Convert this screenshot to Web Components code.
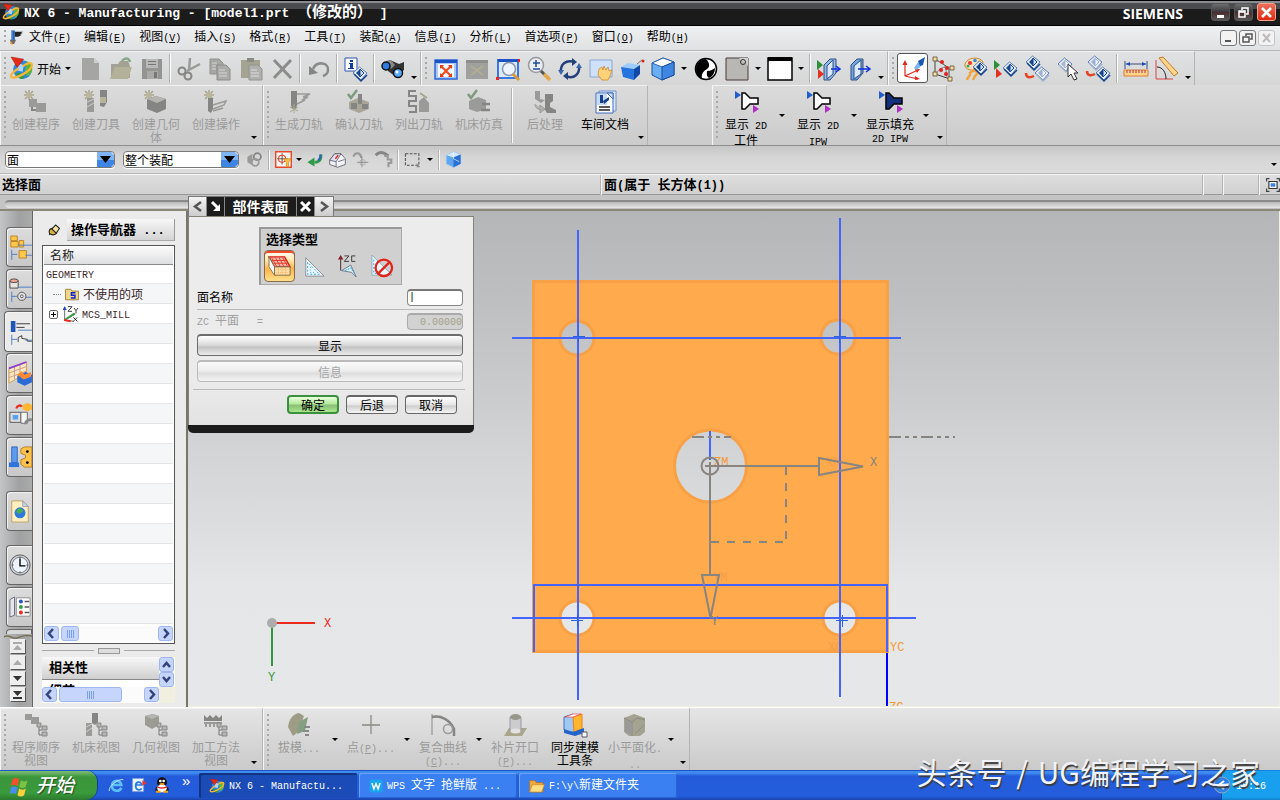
<!DOCTYPE html>
<html lang="zh-CN">
<head>
<meta charset="utf-8">
<title>NX 6 - Manufacturing</title>
<style>
  html, body { margin: 0; min-height: 100%; background: #d4d4d4; }
  body { font: 12px/12px "Liberation Mono", "Noto Sans CJK SC", monospace; color: #000; }
</style>
</head>
<body>
<nx-app></nx-app>
<script>
/* ---------- icon library ---------- */
const G = '#9a9a98', D = '#858583', L = '#b4b4b0';
const gem = (x, y, a = '#16448c', b = '#cfe0fa') =>
  `<g transform="translate(${x} ${y})"><path d="M0 6 6.500 0 14 6 8 13Z" fill="#e8eefa" stroke="#5a7cba"/><path d="M3 6 7 2v8Z" fill="${a}"/><path d="M7 2 11 6 7 10Z" fill="${b}" stroke="${a}"/><path d="M1 7 8 14 14 8" fill="none" stroke="${a}" stroke-width="1.500"/></g>`;
const star = `<path d="M5 0v10M0 5h10M1 1l8 8M9 1 1 9" stroke="#a8a58c" stroke-width="1.500"/><circle cx="5" cy="5" r="2.500" fill="#b9b69a"/>`;
const treeG = `<path d="M15 13v9h3M15 17h3" stroke="#777" fill="none"/><path d="M13 10h4v4h-4zM18 13h5v4h-5zM18 19h5v4h-5z" fill="${L}" stroke="#888"/>`;
const tick = `<path d="M1 4 4 8 10 0" fill="none" stroke="#7f9a80" stroke-width="2.500"/>`;
const globe = `<circle cx="13" cy="13" r="9" fill="#2f86dd"/><path d="M17 5c5 2 6 6 5 10l-4 5-3-4z" fill="#5cb53c"/><path d="M6 17l5-1 4 5-4 1z" fill="#2f9a3a"/><path d="M8 9c2-2 5-2 6 1l-1 5-5-1z" fill="#a9d7ff"/><path d="M2 20C5 23 21 15 22 9c.5-4-5-2-9 1M2 20c-1-3 4-6 7-8" fill="none" stroke="#f5b636" stroke-width="2.200"/><path d="M2 1 14 3 8 11Z" fill="#e52b17" stroke="#9c1208" stroke-width=".5"/>`;
const wedge = (f) => `<path d="M1 1v8l6-4z" fill="#1e5fd0"/><path d="M8 3h3l5 5h8v6h-8l-5 5H8z" fill="${f}" stroke="#000" stroke-width="1.500"/><path d="M19 15v8l6-4z" fill="#b02fc0"/>`;
const tabTree = `<path d="M3 15v11M3 20h6M18 21h7M10 10h15" stroke="#4a7ac0" fill="none"/>`;
const ICONS = {
  nx: globe,
  wingnut: `<path d="M6 2h5v14H6z" fill="#2563b8"/><path d="M11 4h12l-4 2h3l-4 2h3l-5 3h-5z" fill="#222"/><path d="M4 15h9l-3 6H6z" fill="#6b6b6b"/><path d="M4 20l3-2 1 5z" fill="#f39b28"/><path d="M7 3v12" stroke="#8cc0ff"/>`,
  new: `<path d="M4 1h12l5 5v17H4z" fill="#a5a5a3"/><path d="M16 1v5h5z" fill="#cfcfcf"/>`,
  open: `<path d="M2 7h7l2-3h8l2 5v12H2z" fill="#a3a294"/><path d="M1 22 6 10h17l-4 12z" fill="#b3b19a"/><path d="M13 4c3-4 7-3 8 1" fill="none" stroke="#8ca689" stroke-width="2.500"/>`,
  save: `<path d="M2 2h20v20H2z" fill="#949492"/><path d="M6 2h12v9H6z" fill="#b9b9b9"/><path d="M7 14h11v8H7z" fill="#a9a9a7"/><path d="M14 15h3v6h-3zM8 4h8v1H8zM8 7h8v1H8z" fill="#777"/>`,
  cut: `<path d="M12 13 13 1M10 14 23 7" stroke="${G}" stroke-width="2.500"/><circle cx="5" cy="14" r="3.500" fill="none" stroke="${D}" stroke-width="2"/><circle cx="11" cy="19" r="3.500" fill="none" stroke="${D}" stroke-width="2"/>`,
  copy: `<path d="M2 2h9l4 4v11H2z" fill="#a6a6a4" stroke="#92928f"/><path d="M9 8h9l4 4v11H9z" fill="#aaaaa8" stroke="#8b8b89"/><path d="M11 13h6M11 16h8M11 19h8M4 6h5M4 9h4M4 12h4" stroke="#d6d6d4"/>`,
  paste: `<path d="M2 3h19v18H2z" fill="#a5a392"/><path d="M8 1h7v4H8z" fill="#8b8b86"/><path d="M10 8h9l4 4v11H10z" fill="#b0b0ae" stroke="#93938f"/><path d="M12 13h6M12 16h8M12 19h8" stroke="#ddd"/>`,
  del: `<path d="M4 3 21 21M21 3 4 21" stroke="#8c8c8a" stroke-width="3"/>`,
  undo: `<path d="M6 12C10 3 22 6 21 13c0 3-2 5-5 6" fill="none" stroke="#8a8a88" stroke-width="2.500"/><path d="M2 9v9l9-2z" fill="#858583"/>`,
  info: `<path d="M1 1h12v13H1z" fill="#fff" stroke="#2a50b4"/><path d="M6 3h3v2H6zM5 6h4v5h1v1H4v-1h2V7H5z" fill="#123c9c"/>${gem(9, 10)}`,
  find: `<path d="M3 6 9 3l9 4 5-2v8l-8 7-8-6z" fill="#333"/><path d="M5 4 10 3l4 5-4 4z" fill="#888"/><circle cx="5" cy="9" r="4" fill="#2d7be0" stroke="#111" stroke-width="1.500"/><circle cx="17" cy="16" r="4.500" fill="#58a9f5" stroke="#111" stroke-width="1.500"/><circle cx="16" cy="15" r="1.500" fill="#fff"/>`,
  fit: `<path d="M1 3h22v19H1z" fill="#a9c8f8" stroke="#2b66d8" stroke-width="1.500"/><path d="M1 3h22v3H1z" fill="#1d52c4"/><path d="M4 7h16v13H4z" fill="#f4f8ff"/><path d="M7 9l10 10M17 9 7 19" stroke="#f04a1c" stroke-width="2"/><path d="M6 8h4L6 12zM18 8h-4l4 4zM6 20v-4l4 4zM18 20v-4l-4 4z" fill="#e33a12"/>`,
  fitg: `<path d="M1 3h22v19H1z" fill="#a0a09e"/><path d="M1 3h22v3H1z" fill="#8e8e8c"/><path d="M6 9l12 9M18 9 6 18" stroke="#b0ae94" stroke-width="2"/>`,
  zoombox: `<path d="M2 3h20v18H2z" fill="#dcebff" stroke="#3a78e0" stroke-width="2"/><path d="M2 2h20v3H2z" fill="#1d52c4"/><circle cx="13" cy="12" r="6.500" fill="#eef5ff" stroke="#8b97a8" stroke-width="1.500"/><path d="M17 17l6 6" stroke="#d99b3a" stroke-width="3"/><path d="M22 2h2v3h-2zM0 20h3v3H0z" fill="#e22"/>`,
  zoom: `<circle cx="9" cy="8" r="7.500" fill="#e9eef6" stroke="#999" stroke-width="1.500"/><path d="M9 3v7M6 6h7M6 12h7" stroke="#1c4ba0" stroke-width="1.500"/><path d="M14 14l4 4" stroke="#555" stroke-width="3"/><path d="M17 17l6 6" stroke="#e3a748" stroke-width="3.500"/>`,
  rotate: `<path d="M3 15C2 7 8 3 15 4.500M21 9c1 8-5 13-12 10.500" fill="none" stroke="#24417c" stroke-width="2.500"/><path d="M14 1l5 4-5 4zM10 15l-5 4 5 4z" fill="#24417c"/><path d="M21 6l3 5h-6zM3 18l-3-5h6z" fill="#3c66ac"/>`,
  pan: `<path d="M1 3h22v17H1z" fill="#cfe1fa" stroke="#8aa7d0"/><path d="M10 12l3-2 1 3 1-4 2 4 2-3 1 4 3-1-2 6-2 4h-6l-4-5z" fill="#ffd27a" stroke="#c98c33" stroke-width=".8"/>`,
  box3: `<path d="M1 10 8 6l12 2-6 4z" fill="#9dccff"/><path d="M1 10l13 2v11L3 20z" fill="#2573dc"/><path d="M14 12l6-4v9l-6 6z" fill="#1249a8"/><path d="M17 7l5-4" stroke="#777"/><circle cx="23" cy="4" r="1.500" fill="#d22"/>`,
  cube: `<path d="M1 6 12 1l11 4v13l-12 5L1 18z" fill="#6aaef4" stroke="#1b4f9c"/><path d="M1 6l11-5 11 4-12 5z" fill="#fff" stroke="#2c62b0"/><path d="M11 10l12-5v13l-12 5z" fill="#3f86e2" stroke="#1b4f9c"/>`,
  yin: `<circle cx="12" cy="12" r="10.500" fill="#fff" stroke="#000" stroke-width="1.500"/><path d="M12 2C7 2 2 6 2 12c0 5 3 9 6 10-1-6 2-8 5-10s3-6-1-10z" fill="#000"/><path d="M13 14c4 0 6-2 8-3 0 5-3 9-6 10-3-2-2-5-2-7z" fill="#000"/>`,
  page: `<path d="M1 1h22v22H1z" fill="#b9b7b3" stroke="#4b3b3b"/><path d="M14 1h9v9c-1-4-3-5-5-5" fill="#cfcfcc"/><circle cx="18" cy="5" r="2.500" fill="none" stroke="#333"/>`,
  wbox: `<path d="M0 1h24v22H0z" fill="#fff" stroke="#000" stroke-width="1.500"/><path d="M0 0h24v4H0z"/>`,
  cutsec: `<path d="M7 8 13 2h6v14l-6 7H7z" fill="#8db9ee" stroke="#344f7c"/><path d="M10 9l6-6v14l-6 5z" fill="#dbe9fb" stroke="#344f7c"/><path d="M0 3v10l6-5z" fill="#2c9038"/><path d="M1 12v10l6-5z" fill="#e33222"/><path d="M14 12h8M19 9l4 3-4 3" stroke="#1230e0" stroke-width="1.500" fill="none"/>`,
  section: `<path d="M3 8 9 2h6v14l-6 7H3z" fill="#6fa5e6" stroke="#344f7c"/><path d="M6 9l7-6v14l-7 5z" fill="#dbe9fb" stroke="#344f7c"/><path d="M10 12h11M18 9l4 3-4 3" stroke="#1230e0" stroke-width="1.500" fill="none"/>`,
  wcs: `<path d="M4 20V7M4 20l13-6M4 20l13 3" stroke="#e0281a" fill="none" stroke-width="1.200"/><path d="M4 4l2.500 5h-5zM19 13l-5 0 2 4zM19 23l-5-3v4z" fill="#e0281a"/><path d="M13 12l4-6 4 3-5 5z" fill="#7ab6ef"/><path d="M17 5l7-4-2 8-3 1z" fill="#1d57b5"/>`,
  mesh: `<path d="M3 2v15l15 5M3 2l14 9v11" stroke="#444" fill="none"/><path d="M4 4c8 0 10 5 11 16M4 17c3-6 8-8 14-6" stroke="#888" fill="none"/><path d="M1 0h4v4H1zM1 15h4v4H1zM16 20h4v4h-4zM18 9h4v4h-4z" fill="#f8d9a8" stroke="#764"/><circle cx="10" cy="5" r="2" fill="#d22"/><circle cx="15" cy="11" r="2" fill="#d22"/><circle cx="9" cy="13" r="2" fill="#d22"/><circle cx="14" cy="17" r="2" fill="#d22"/>`,
  palette: `<path d="M2 7C4 0 17-1 20 5l-2 8C9 14 1 13 2 7z" fill="#fbe2bd" stroke="#c8862e"/><circle cx="7" cy="6" r="2" fill="#e33"/><circle cx="12" cy="3.500" r="1.800" fill="#3a8ad8"/><circle cx="16" cy="5" r="1.500" fill="#eb0"/><circle cx="5" cy="9" r="1.500" fill="#3a5"/><path d="M4 23c1-4 4-4 3-7l4-3 4 3-3 3-2 4" fill="none" stroke="#f1a53c" stroke-width="2.500"/>${gem(10, 4)}`,
  showhide: `<path d="M0 3v10l6-5z" fill="#2c9038"/><path d="M2 11v10l6-4z" fill="#e33222"/>${gem(9, 5)}`,
  hide: `${gem(1, -1)}${gem(10, 10, '#9fb0d0', '#eef2fb')}<path d="M1 16c0 5 4 5 8 3" fill="none" stroke="#e54321" stroke-width="2.500"/>`,
  pick: `${gem(2, 1, '#aab6cf', '#f2f5fb')}<path d="M12 7v13l3-3 3 6 3-1-3-6h4z" fill="#fff" stroke="#333"/>`,
  hideall: `${gem(1, -1, '#9fb0d0', '#eef2fb')}${gem(9, 10)}<path d="M0 14c0 5 4 5 8 3" fill="none" stroke="#e54321" stroke-width="2.500"/>`,
  ruler: `<path d="M0 13h24v6H0z" fill="#ffd58c" stroke="#e07c34"/><path d="M3 13v3M6 13v3M9 13v3M12 13v3M15 13v3M18 13v3M21 13v3" stroke="#b35"/><path d="M1 4v8M23 4v8M2 7h20" stroke="#3b4d78"/><path d="M2 7l4-2v4zM22 7l-4-2v4z" fill="#1c4ac0"/>`,
  angle: `<path d="M1 3v19h17" fill="none" stroke="#d44"/><path d="M4 1l4-1 15 16-4 3z" fill="#ffd58c" stroke="#c7782a"/><path d="M2 10c6 0 9 6 9 12" fill="none" stroke="#222"/>`,
  gProg: `${star}<path d="M5 9h8v8H5zM12 13h10v9H12z" fill="${G}"/><path d="M8 17v3h4" stroke="${D}" fill="none" stroke-width="2"/>`,
  gTool: `${star}<path d="M3 8h7v14H3z" fill="${G}"/><path d="M3 12l7-3M3 17l7-4" stroke="#ccc"/><path d="M16 0h7v12l-3 5-4-1z" fill="${D}"/><path d="M16 7h6v6h-6z" fill="#b7b49a"/>`,
  gGeom: `${star}<path d="M3 9l9-3 10 3v10l-9 4-10-4z" fill="${D}"/><path d="M3 9l9-3 10 3-9 4z" fill="${L}"/>`,
  gOper: `${star}<path d="M4 8h5v11l-2 4-3-2z" fill="${D}"/><path d="M9 15 22 11l-2 4-11 4M9 21l10-3" stroke="${G}" stroke-width="1.500" fill="none"/>`,
  gGen: `<path d="M4 1h6v14l-1 4H5l-1-4z" fill="${D}"/><path d="M10 4h13l-7 3h5l-6 3h3l-8 4" stroke="${G}" stroke-width="1.500" fill="none"/><path d="M7 14v9M3 17l8 4M3 22l8-5" stroke="#aaa88e"/>`,
  gVer: `<path d="M2 12l9-4 11 4v7l-10 4-10-4z" fill="#a8a698"/><path d="M11 4h4v10h-4zM4 13h6v6H4zM15 14h6v5h-6z" fill="${D}"/>${tick}`,
  gList: `<path d="M9 1H2v5h7v5H2v5h7v6H2" stroke="${D}" stroke-width="2" fill="none"/><path d="M12 11l5-4 5 6v9H12z" fill="${G}"/><path d="M13 3l7 5" stroke="#a7a58c" stroke-width="2"/>`,
  gSim: `<path d="M2 11l9-4 8 3v9l-9 3-8-3z" fill="${G}"/><path d="M15 14h8M14 20h9" stroke="${D}" stroke-width="2.500"/>${tick}`,
  gPost: `<path d="M2 1h5v8l5 1-4 3-6-4z" fill="${G}"/><path d="M12 4h8v7l-3 2v4l6 3v3h-9l-2-3z" fill="${D}"/><path d="M2 14c0 4 3 6 8 5M7 15l5 4-5 4z" fill="${L}" stroke="${G}"/>`,
  doc: `<path d="M6 1h17v20H6z" fill="#dce8fa" stroke="#6b8fd0"/><path d="M3 3h17v20H3z" fill="#fff" stroke="#3f68b8"/><path d="M4 4h10v11H4z" fill="#c5dbf8"/><path d="M7 5h3v8H7zM10 11l6-4v3l-5 4" fill="#163f8d"/><path d="M14 3h6v6z" fill="#cfdff8" stroke="#3f68b8"/><path d="M6 17h11M6 20h11" stroke="#222" stroke-width="1.500"/>`,
  wedge: wedge('#fff'), wedgef: wedge('#12307c'),
  bProg: `<path d="M1 1h7v6H1zM7 4h8v7H7z" fill="${G}"/>${treeG}`,
  bMach: `<path d="M8 0h6v9l-3 3-3-2z" fill="${D}"/><path d="M2 10h6v13H2z" fill="${G}"/><path d="M2 14l6-3M2 19l6-4" stroke="#ccc"/>${treeG}`,
  bGeom: `<path d="M1 3l8-2 6 2v9l-7 4-7-4z" fill="#9c9b94"/><path d="M1 3l8-2 6 2-7 3z" fill="${L}"/>${treeG}`,
  bMeth: `<path d="M0 2l3 3 3-3 3 3 3-3 3 3 3-3v6H0z" fill="${D}"/><path d="M0 9h18v2H0zM1 11h2v3H1zM5 11h2v3H5zM9 11h2v3H9z" fill="${G}"/>${treeG}`,
  draft: `<path d="M1 14C2 6 6 1 12 0l5 3-6 16-5 4z" fill="#9f9c86"/><path d="M12 9l9-5-3 14-8 3z" fill="#83a083"/><path d="M17 14h6M16 18h6M18 22h4" stroke="#888" stroke-width="2"/>`,
  plus: `<path d="M12 2v19M3 12h18" stroke="#8a8a84" stroke-width="1.300"/>`,
  curve: `<path d="M1 1v21" stroke="#888"/><path d="M1 4c9-2 18 3 22 12v7" fill="none" stroke="${D}" stroke-width="2.500"/><circle cx="17" cy="16" r="4.500" fill="none" stroke="${G}" stroke-width="1.500"/>`,
  patch: `<path d="M6 15h18l-5 8H1z" fill="#a9a68c"/><path d="M7 4h11v13c-3 3-8 3-11 0z" fill="#ccc" stroke="#99a"/><ellipse cx="12.500" cy="4" rx="5.500" ry="3" fill="#99968a"/><ellipse cx="12.500" cy="18" rx="5" ry="2.500" fill="#e2e2e2"/>`,
  sync: `<path d="M1 4l9-3 3 2v15l-8 2-4-3z" fill="#9fc8f5" stroke="#3e76c4"/><path d="M10 4l9-3v15l-8 3z" fill="#ffb62e" stroke="#e9801b"/><path d="M2 4 10 1l8 0-8 3z" fill="#fff" stroke="#e33" stroke-width=".6"/><path d="M1 16l9 3 11-4v5l-9 3L1 20z" fill="#2465cc"/><path d="M19 19h5v5h-5z" fill="#fff" stroke="#556"/>`,
  facet: `<path d="M1 5l10-4 11 4v14l-5 4H6l-5-4z" fill="#a4a291"/><path d="M1 5l8 4v14M9 9l5-4 8 2M13 20l8-8" stroke="#8b8b80" fill="none"/><path d="M2 6l7 4v12l-7-4z" fill="#999"/>`,
  gears: `<path d="M2 8l7-4v16l-7-4z" fill="${G}"/><circle cx="16" cy="8" r="5" fill="none" stroke="${D}" stroke-width="2.500"/><circle cx="13" cy="16" r="5" fill="none" stroke="${G}" stroke-width="2.500"/>`,
  snap: `<path d="M1 1h22v22H1z" fill="#f6f6f4" stroke="#e8472a" stroke-width="2"/><path d="M10 3v16M3 11h15" stroke="#222"/><circle cx="10" cy="11" r="5" fill="none" stroke="#e8472a" stroke-width="1.500"/><path d="M12 11h11l-4 5v7l-3-2v-5z" fill="#ffc33a" stroke="#c8832a"/>`,
  back: `<path d="M21 5c1 8-3 11-9 11" fill="none" stroke="#2f9a4a" stroke-width="4"/><path d="M20 5c1 4 0 6-3 8" stroke="#2c62c0" stroke-width="3" fill="none"/><path d="M2 16l10-7v13z" fill="#2f9a4a"/>`,
  shade: `<path d="M1 13l7-9h9l6 7v8l-11 4-11-4z" fill="#f4f4f8" stroke="#445"/><path d="M8 4h9l-7 11-9-2z" fill="#dfe3ee" stroke="#445"/><path d="M10 15v7" stroke="#445"/><path d="M9 11l4-5" stroke="#e22" stroke-width="2"/><path d="M13 15l9-3" stroke="#445"/>`,
  cross1: `<path d="M2 8c3-8 11-5 11 2" fill="none" stroke="${G}" stroke-width="3"/><path d="M14 8v15M7 16h16" stroke="#777"/><circle cx="15" cy="16" r="4" fill="none" stroke="${G}"/>`,
  cross2: `<path d="M1 6c5-6 12-4 18 1" stroke="${D}" stroke-width="4" fill="none"/><path d="M13 7h5v5h5v5h-4v6" fill="none" stroke="${G}" stroke-width="3"/>`,
  marquee: `<path d="M2 4h19v16H2z" fill="none" stroke="#555" stroke-width="1.500" stroke-dasharray="4 2"/><path d="M18 17l5 6h-5z" fill="#888"/>`,
  cubeblue: `<path d="M2 6 12 1l10 4v13l-10 5L2 18z" fill="#5ea6f0" stroke="#8abcf3"/><path d="M2 6l10-5 10 4-10 4z" fill="#d3e8ff"/><path d="M12 9l10-4v13l-10 5z" fill="#2a6fd2"/><path d="M12 1v10l8 4" stroke="#e8f4ff" fill="none"/>`,
  full: `<path d="M5 6h14v12H5z" fill="#fff" stroke="#333" stroke-width="2"/><path d="M8 9h8v6H8z" fill="#3a7fe0"/><path d="M1 6V1h5M18 1h5v5M23 18v5h-5M6 23H1v-5" fill="none" stroke="#444" stroke-width="2"/>`,
  pin: `<path d="M4 20l5-6" stroke="#222" stroke-width="2"/><ellipse cx="11" cy="14" rx="7" ry="6" fill="#d9b23a" stroke="#222" stroke-width="2"/><path d="M9 9l7-7 7 6-6 9z" fill="#f4e6a0" stroke="#222" stroke-width="2"/>`,
  folder: `<path d="M1 4h9l2 3h11v15H1z" fill="#f5d886" stroke="#9a7a30" stroke-width="1.500"/><path d="M18 10h-7v4h6v5h-7" fill="none" stroke="#0b22d8" stroke-width="2.500"/>`,
  csys: `<path d="M4 21V2M4 21l16-9M4 21l14 2" stroke="#222" fill="none"/><path d="M4 0l3 6H1z" fill="#1747c8"/><path d="M4 21l15-10" stroke="#3a9a48" stroke-width="3"/><path d="M3 21l10 2" stroke="#e43022" stroke-width="3"/><path d="M9 1h6L9 8h6M18 3l3 4 3-4M21 7v4M17 17l6 6M23 17l-6 6" stroke="#222" fill="none" stroke-width="1.300"/>`,
  ie: `<path d="M20 16c-3 7-14 6-14-3s13-10 14-1H7" fill="none" stroke="#5cc0ff" stroke-width="4"/><path d="M2 21C0 15 15 2 23 4" fill="none" stroke="#bfe6ff" stroke-width="1.500"/>`,
  mail: `<path d="M2 2h17v20H2z" fill="#e9f2ff" stroke="#5a8ad0"/><path d="M16 17c-2 4-9 3-9-4s9-7 9-1H8" fill="none" stroke="#2878dd" stroke-width="2.500"/><path d="M17 5l7 4-7 4z" fill="#e33"/>`,
  qq: `<path d="M2 21c-1-6 3-7 5-8h10c4 2 6 3 5 8z" fill="#222"/><circle cx="12" cy="8" r="7.500" fill="#111"/><ellipse cx="12" cy="17" rx="7" ry="6" fill="#fff"/><circle cx="9.500" cy="6" r="2" fill="#fff"/><circle cx="14.500" cy="6" r="2" fill="#fff"/><ellipse cx="12" cy="10.500" rx="4" ry="1.500" fill="#f5a21c"/><path d="M4 13c5 3 11 3 16 0l-1 3c-5 2-9 2-13 0z" fill="#e22"/><path d="M3 22h7M14 22h7" stroke="#f5a21c" stroke-width="3"/>`,
  wps: `<rect x="1" y="1" width="22" height="22" rx="3" fill="#18a4ef"/><path d="M5 7l3.500 10L12 8l3.500 9L19 7" fill="none" stroke="#fff" stroke-width="2.500"/>`,
  fold: `<path d="M1 4h8l2 3h10v14H1z" fill="#f2a93a" stroke="#b8701c"/><path d="M1 21l4-11h18l-4 11z" fill="#ffdd82" stroke="#c9852c"/>`,
  win: `<path d="M3 4c3-2 5-2 8 0l-2 8c-3-2-5-2-8 0z" fill="#f0532b"/><path d="M13 5c3 2 5 2 8 0l-2 8c-3 2-5 2-8 0z" fill="#7cc243"/><path d="M1 14c3-2 5-2 8 0l-2 8c-3-2-4-2-7 0z" fill="#4a8df0"/><path d="M11 15c3 2 5 2 8 0l-2 8c-3 2-5 2-8 0z" fill="#fccf3c"/>`,
  tAsm: `<path d="M2 0h7v5H2zM2 6h8v6H2zM11 5h5v7h-5zM11 16h8v8h-8z" fill="#ffc84a" stroke="#b98021"/>${tabTree}`,
  tCon: `<path d="M1 3v8h9V3z" fill="#e8e4e2" stroke="#444"/><ellipse cx="5.500" cy="3" rx="4.500" ry="2" fill="#f2a492" stroke="#444"/><circle cx="14" cy="20" r="4.500" fill="#ddd" stroke="#555"/><circle cx="14" cy="20" r="1.500" fill="#fff" stroke="#555"/>${tabTree}`,
  tOp: `<path d="M2 0h5v12H2z" fill="#1f57b6"/><path d="M8 3h15M8 7h9" stroke="#333"/><path d="M10 23v-5l4-2v3l6 1v2h5" stroke="#333" fill="#eee"/>${tabTree}`,
  tMach: `<path d="M0 7 19 0v12L0 23z" fill="#fbe7c0" stroke="#d29a4a"/><path d="M0 12 19 5M0 17l19-7M6 5v14M12 3v13" stroke="#c98"/><path d="M0 7 19 0" stroke="#8a3fd0" stroke-width="2"/><path d="M9 15l9-4 7 3v8l-8 4-8-4z" fill="#2b6bd6"/><path d="M9 14l5-4 3 4 7-3v5l-8 3z" fill="#ff8a30"/>`,
  tRes: `<path d="M1 9h12v11H1z" fill="#dedede" stroke="#555"/><path d="M13 9h7v12h-7z" fill="#f5f5f5" stroke="#666"/><path d="M4 12h6v5H4z" fill="#5aa0ee"/><path d="M18 22c0-4 3-5 7-5" stroke="#888" stroke-width="3" fill="none"/><path d="M8 5c1-4 5-4 6-2" stroke="#e4321f" stroke-width="2.500" fill="none"/><path d="M15 1l5-2 5 2v5l-5 2-5-2z" fill="#ffb52e"/>`,
  tBolt: `<path d="M3 1h6v17H3z" fill="#5b9cf0" stroke="#2b62b8"/><path d="M0 18h11v5H0z" fill="#2f73dc"/><path d="M13 3l4-2h8v22h-8l-4-3v-5l5-2v-3l-5-2z" fill="#ffc24a" stroke="#b67a20"/><circle cx="20" cy="6" r="1.500"/><circle cx="20" cy="18" r="1.500"/>`,
  tWeb: `<path d="M3 1h12l6 6v17H3z" fill="#ffeec0" stroke="#c0a060"/><path d="M15 1v6h6z" fill="#c9d8ef" stroke="#99a"/><circle cx="12" cy="14" r="6" fill="#2d7be0"/><path d="M9 10c3-2 7 0 6 3l-4 2-3-2z" fill="#4cb04a"/>`,
  tClock: `<circle cx="12" cy="12" r="11" fill="#c9ced6" stroke="#555"/><circle cx="12" cy="12" r="8.500" fill="#eef4fd" stroke="#777"/><path d="M12 5v8h6" stroke="#000" stroke-width="1.500" fill="none"/><path d="M12 3v2M12 19v2M3 12h2M19 12h2" stroke="#456"/>`,
  tRole: `<path d="M1 4l5-3v20l-5 2z" fill="#e4e8ee" stroke="#667"/><path d="M8 2h15v20H8z" fill="#fff" stroke="#888"/><circle cx="13" cy="6" r="2.200" fill="#2a58c8"/><circle cx="13" cy="12" r="2.200" fill="#32a040"/><circle cx="13" cy="18" r="2.200" fill="#e43022"/><path d="M17 6h5M17 12h5M17 18h5" stroke="#555" stroke-width="1.500"/>`,
  face: `<path d="M0 2h17l6 11H6z" fill="#f7b8a8" stroke="#d21f12" stroke-width="1.500"/><path d="M3 3l5 9M7 3l5 9M11 3l5 9M15 3l5 9M3 6h16M5 9h16" stroke="#e23a2c"/><path d="M6 13h17v9H6z" fill="#ffdfa8" stroke="#7a6a4a"/><path d="M0 2l6 11v9L0 13z" fill="#fff" stroke="#7a6a4a"/><path d="M8 16h14M8 19h14M10 14v7M14 14v7M18 14v7" stroke="#f3b060" stroke-dasharray="1 1"/>`,
  tri: `<path d="M3 3v20h20z" fill="#e9f6fd" stroke="#777" stroke-width=".8"/><path d="M5 8v13h13z" fill="none" stroke="#2f9fe0" stroke-dasharray="2 2"/><path d="M8 13v6h6" fill="none" stroke="#2f9fe0" stroke-dasharray="1 2"/>`,
  zc: `<path d="M4 17V4" stroke="#422"/><path d="M4 0l3 5H1z" fill="#822"/><path d="M8 1h5l-5 6h5M20 1h-4v6h4" fill="none" stroke="#333"/><path d="M5 17l10-6 6 13-5-5z" fill="#d9effb" stroke="#678"/><path d="M9 17l6-3 3 5" fill="none" stroke="#2f9fe0" stroke-dasharray="2 1"/>`,
  none: `<path d="M1 0v22h22z" fill="#e9f6fd" stroke="#8ab"/><path d="M3 5v15h9" fill="none" stroke="#2f9fe0" stroke-dasharray="2 2"/><circle cx="14" cy="14" r="9" fill="none" stroke="#e0261a" stroke-width="2.500"/><path d="M8 20 20 8" stroke="#e0261a" stroke-width="2.500"/>`
};
const ic = (n, s = 24) => `<svg width="${s}" height="${s}" viewBox="0 0 24 24" overflow="visible" aria-hidden="true">${ICONS[n]}</svg>`;

/* Latin runs are set in half-width cells beside full-width Chinese glyphs. */
const mix = s => s.replace(/[\x20-\x7e]+/g, m => m.split('|').map(x => {
  if (!x) return '';
  return `<span class="l">${x.replace(/_(\w)_/g, '<u>$1</u>')}</span>`;
}).join('<br>'));

const BASE = `
*{box-sizing:border-box}
:host{display:block;font:12px/12px "Noto Sans CJK SC",sans-serif}
.l{font-family:"Liberation Mono",monospace;font-size:10px;white-space:pre}
.b{font-size:13px;font-weight:700}.b .l{font-size:12px}
button{font:inherit;color:inherit;background:none;border:0;padding:0;margin:0}
svg{display:block;flex:none}
`;
function define(name, css, render) {
  customElements.define(name, class extends HTMLElement {
    constructor() {
      super();
      this.attachShadow({ mode: 'open' });
    }
    connectedCallback() {
      const t = document.createElement('template');
      t.innerHTML = `<style>${BASE}${css}</style>${render(this)}`;
      this.shadowRoot.replaceChildren(t.content.cloneNode(true));
    }
  });
}
const at = (e, n) => e.getAttribute(n) || '';

/* ---------- toolbar parts ---------- */
define('nx-group', `
:host{display:flex;flex:none;border-left:1px solid #f6f6f6;border-top:1px solid #f2f2f2;border-right:1px solid #b4b4b4;padding-left:3px}
i{width:2px;margin:5px 3px 4px 0;background:repeating-linear-gradient(#a8a8a8 0 2px,transparent 2px 5px);flex:none}
:host([flush]) i{margin-right:0}
`, () => '<i></i><slot></slot>');

define('nx-tool', `
:host{width:31px;flex:none;color:#000}
:host([label]){width:60px}
:host([label][narrow]){width:56px}
:host([disabled]){color:#9b9b9b}
:host([small]){width:23px}
button{width:100%;height:100%;display:flex;align-items:center;justify-content:center;flex-direction:column}
:host([label]) button{justify-content:flex-start;padding-top:4px;gap:3px;line-height:13px;white-space:nowrap}
:host([on]) button{background:#fff;border:1px solid #555;border-radius:3px;height:30px;margin-top:1px}
`, e => `<button type="button" ${e.hasAttribute('disabled') ? 'disabled' : ''} aria-label="${at(e, 'label').replace(/[|_]/g, '') || at(e, 'icon')}">${ic(at(e, 'icon'), e.hasAttribute('small') ? 17 : 24)}${at(e, 'label') ? `<span>${mix(at(e, 'label'))}</span>` : ''}</button>`);

define('nx-drop', `
:host{width:12px;flex:none}
:host([wide]){width:16px}
:host([thin]){width:8px}
button{width:100%;height:100%;display:flex;align-items:center;justify-content:center}
:host([low]) button{align-items:flex-end;padding-bottom:6px}
i{border:3px solid transparent;border-top-color:#000;border-bottom:0}
`, () => '<button type="button" aria-label="更多"><i></i></button>');

define('nx-sep', `:host{width:6px;flex:none;padding:2px 2px}i{display:block;height:100%;width:2px;background:linear-gradient(90deg,#b2b2b2 50%,#fff 50%)}`, () => '<i></i>');

define('nx-bar', `
:host{display:flex;background:linear-gradient(#e0e2e3,#d6d6d6);height:34px;flex:none}
:host([tall]){background:linear-gradient(#dbdbdb,#cbcbcb);height:61px;border-bottom:1px solid #8f8f8f}
:host([bottom]){background:linear-gradient(#e5e5e5,#cacaca);height:63px;border:0;border-top:1px solid #fff}
`, () => '<slot></slot>');

/* ---------- title and menu ---------- */
define('nx-title', `
:host{display:flex;align-items:center;height:26px;flex:none;padding:0 4px 2px 2px;color:#fff;background:linear-gradient(#000 0 1px,#8a8b90 1px 3px,#4b4c50 3px 9px,#1b1b1b 9px 25px,#000 25px)}
h1{margin:0 0 0 4px;font-size:15px;line-height:20px;white-space:pre}
h1 .l{font-size:13px}
b{margin-left:auto;font:700 14px/20px "Open Sans",sans-serif;margin-right:28px;padding-top:4px}
.w{display:flex;gap:4px}
.w button{width:19px;height:18px;border:1px solid #555;border-radius:3px;background:linear-gradient(#6d6d70,#3a3a3c 50%,#4c2a2c 50%,#555);display:grid;place-items:center}
.w button:last-child{background:linear-gradient(#e8705c,#e02a12);border-color:#f8a28c}
`, () => `${ic('nx', 18)}<h1>${mix('NX 6 - Manufacturing - [model1.prt （修改的） ]')}</h1><b>SIEMENS</b><div class="w">
<button aria-label="最小化"><svg width="13" height="13"><path d="M3 9h7v3H3z" fill="#fff"/></svg></button>
<button aria-label="还原"><svg width="13" height="13"><path d="M5 4V2h6v6H9M2 5h6v6H2zM2 6h6" stroke="#fff" stroke-width="1.500" fill="none"/></svg></button>
<button aria-label="关闭"><svg width="13" height="13"><path d="M2 2l9 9M11 2l-9 9" stroke="#fff" stroke-width="2.500"/></svg></button></div>`);

define('nx-menu', `
:host{display:flex;align-items:center;height:25px;flex:none;border-bottom:1px solid #b6b6b6;background:linear-gradient(#eff0f1,#dfe1e3);padding:0 5px 1px 4px}
i{width:2px;height:15px;background:repeating-linear-gradient(#a8a8a8 0 2px,transparent 2px 5px);margin-right:1px}
nav{display:flex;gap:13px;margin-left:5px}
nav button{line-height:16px;white-space:nowrap}
.w{margin-left:auto;display:flex;gap:2px}
.w button{width:17px;height:16px;border:1px solid #777;border-radius:3px;background:#f3f3f3;display:grid;place-items:center}
.w button:last-child{border-color:#c4c4c4}
`, () => `<i></i>${ic('wingnut', 17)}<nav>${['文件(_F_)', '编辑(_E_)', '视图(_V_)', '插入(_S_)', '格式(_R_)', '工具(_T_)', '装配(_A_)', '信息(_I_)', '分析(_L_)', '首选项(_P_)', '窗口(_O_)', '帮助(_H_)'].map(m => `<button>${mix(m)}</button>`).join('')}</nav><div class="w">
<button aria-label="最小化"><svg width="11" height="10"><path d="M2 7h6v2H2z" fill="#555"/></svg></button>
<button aria-label="还原"><svg width="11" height="10"><path d="M4 3V1h6v5H8M1 4h6v5H1z" stroke="#555" fill="none" stroke-width="1.500"/></svg></button>
<button aria-label="关闭" disabled><svg width="11" height="10"><path d="M2 1l7 8M9 1 2 9" stroke="#bbb" stroke-width="2"/></svg></button></div>`);

define('nx-start', `:host{width:65px;flex:none}button{display:flex;align-items:center;height:100%;gap:3px}i{border:3px solid transparent;border-top-color:#000;border-bottom:0;margin-left:1px}`,
  () => `<button>${ic('nx', 25)}<span>开始</span><i></i></button>`);

/* ---------- selection bar ---------- */
define('nx-combo', `
:host{position:relative;width:110px;height:17px;flex:none}
:host([w]){width:116px}
select{appearance:none;width:100%;height:17px;border:1px solid #777;border-radius:4px;background:#fff;font:inherit;color:#000;padding:0 0 0 1px;box-shadow:0 1px #fff}
svg{position:absolute;right:1px;top:1px;pointer-events:none}
`, e => `<select aria-label="${at(e, 'name')}"><option>${at(e, 'value')}</option></select><svg width="17" height="15"><path d="M0 0h14l3 3v9l-3 3H0z" fill="#7fb4f5"/><path d="M0 8h17v4l-3 3H0z" fill="#3f86e4"/><path d="M3 4h11l-5.500 7z" fill="#000"/></svg>`);

define('nx-filter', `
:host{display:flex;align-items:center;height:28px;flex:none;background:linear-gradient(#c6c6c6,#d6d6d6 40%,#dcdcdc);border-bottom:1px solid #b8b8b8;padding-left:5px}
nx-combo{margin-right:8px}
nx-combo[w]{margin-right:4px}
nx-tool,nx-drop,nx-sep{height:24px}
.end{margin-left:auto}
`, () => `<nx-combo name="类型过滤器" value="面"></nx-combo><nx-combo w name="选择范围" value="整个装配"></nx-combo>
<nx-tool small icon="gears"></nx-tool><nx-sep></nx-sep><nx-tool small icon="snap"></nx-tool><nx-drop thin></nx-drop><nx-tool small icon="back"></nx-tool><nx-tool small icon="shade"></nx-tool><nx-tool small icon="cross1" disabled></nx-tool><nx-tool small icon="cross2" disabled></nx-tool><nx-sep></nx-sep><nx-tool small icon="marquee"></nx-tool><nx-drop></nx-drop><nx-sep></nx-sep><nx-tool small icon="cubeblue"></nx-tool><nx-drop low class="end"></nx-drop>`);

define('nx-prompt', `
:host{display:grid;grid-template-columns:600fr 602fr 20px 36px 22px;height:21px;flex:none;background:linear-gradient(#dedede,#d0d0d0);border-top:1px solid #f4f4f4;border-bottom:1px solid #999;line-height:18px;white-space:nowrap}
div{padding-left:2px}
div+div{border-left:1px solid #b4b4b4;box-shadow:inset 1px 0 #f4f4f4;padding-left:3px}
svg{margin:3px 4px}
`, () => `<div class="b">选择面</div><div class="b">${mix('面(属于 长方体(1))')}</div><div></div><div></div><div>${ic('full', 14)}</div>`);

define('nx-groove', `
:host{height:16px;flex:none;background:#c4c4c4;padding:5px 0 0 5px;border-bottom:2px solid #8a8778}
i{display:block;height:8px;border-top:2px solid #8a8a8a;border-radius:4px 0 0 4px;background:linear-gradient(#b8b8b8,#e6e6e6)}
`, () => '<i></i>');

/* ---------- resource tabs ---------- */
define('nx-tabs', `
:host{display:flex;flex-direction:column;width:33px;flex:none;background:linear-gradient(90deg,#c4c5c6,#a0a1a2 60%,#aaa);border-right:1px solid #666;padding:16px 0 3px 6px;gap:2px;overflow:hidden}
button{height:40px;flex:none;border:1px solid #666;border-right:0;border-radius:4px 0 0 4px;background:linear-gradient(#dcdcdc,#c8c8c8);box-shadow:inset 1px 1px #f4f4f4;display:flex;align-items:center;padding-left:2px}
button.on{background:#ebebeb;height:41px;margin:0 -1px -1px -2px;padding-left:4px}
button.gap{margin-top:12px}
.cut{height:5px;border-radius:4px 0 0;border:1px solid #666;border-bottom:0;background:#d8d8d8;flex:none}
.wave{margin-left:-2px;margin-top:-2px}
.s{display:grid;gap:2px;margin:-3px 0 0 4px}
.s button{width:15px;height:14px;border:0;border-radius:0;background:#eee;box-shadow:1px 1px #555;padding:0;justify-content:center}
`, () => {
  const b = (n, c = '') => `<button class="${c}" aria-label="${n}">${ic(n, 22)}</button>`;
  const s = (p, c) => `<button aria-label="滚动"><svg width="11" height="11"><path d="${p}" fill="${c}"/></svg></button>`;
  return b('tAsm') + b('tCon') + b('tOp', 'on') + b('tMach') + b('tRes') + b('tBolt') + b('tWeb', 'gap') + b('tClock', 'gap') + b('tRole') +
  `<div class="cut"></div><svg class="wave" width="29" height="6"><path d="M0 3c5-4 8 3 13 1s8-3 16-2" fill="none" stroke="#777058" stroke-width="1.500"/></svg><div class="s">${s('M1 1h9v2H1zM1 9l4.500-5L10 9z', '#aaa')}${s('M1 8l4.500-5L10 8z', '#aaa')}${s('M1 3h9L5.500 8z', '#333')}${s('M1 2h9L5.500 7zM1 8h9v2H1z', '#333')}</div>`;
});

/* ---------- scroll bars ---------- */
define('nx-scroll', `
:host{display:flex;height:16px;flex:none;background:#fbfbfb}
:host([vertical]){flex-direction:column;width:16px;height:auto}
button{width:15px;height:15px;flex:none;border:1px solid #9fb6ee;border-radius:3px;background:#c6d5fb;display:grid;place-items:center}
.t{width:18px;margin-left:2px}
:host([long]) .t{width:63px}
:host([vertical]) button+button{margin-top:auto}
.e{margin-left:auto}
`, e => {
  const a = (d, c = '') => `<button class="${c}" aria-label="滚动"><svg width="11" height="11"><path d="${d}" fill="none" stroke="#33447c" stroke-width="2.500"/></svg></button>`;
  return e.hasAttribute('vertical') ? a('M2 8l3.500-4L9 8') + a('M2 3l3.500 4L9 3') :
    a('M7 1 3 5.500 7 10') + `<button class="t" aria-label="滑块"><svg width="9" height="8"><path d="M1.500 0v8M3.500 0v8M5.500 0v8M7.500 0v8" stroke="#7a9ff0"/></svg></button>` + a('M4 1l4 4.500L4 10', 'e');
});

/* ---------- operation navigator ---------- */
define('nx-navigator', `
:host{display:flex;flex-direction:column;width:155px;flex:none;background:#ebebeb;padding:8px 11px 4px 9px;border-right:2px solid #77756c}
header{display:flex;align-items:center;gap:7px;height:22px;padding-left:5px}
h2{margin:0;flex:1;height:22px;line-height:20px;padding-left:4px;border:1px solid #aaa;border-left:0;border-top:0;background:linear-gradient(#f7f7f7,#d4d4d4);border-right-color:#999;white-space:nowrap;overflow:hidden}
.list{margin-top:4px;flex:1;min-height:120px;border:1px solid #555;padding:1px;background:#fff;display:flex;flex-direction:column;overflow:hidden}
.rows{flex:1;background:repeating-linear-gradient(#fff 0 19px,#e4e5e8 19px 20px,#f5f6f8 20px 39px,#e4e5e8 39px 40px);background-position:0 17px;overflow:hidden}
table{border-collapse:collapse;width:100%;color:#3c2828}
th{height:17px;text-align:left;font-weight:400;color:#222;padding:0 0 0 6px;background:linear-gradient(#fafafa,#dedfe1);border-bottom:1px solid #888}
td{height:20px;padding:0 0 0 2px}
td>div{display:flex;align-items:center;height:20px;gap:4px}
.dots{width:8px;border-top:1px dotted #888;margin-left:7px}
.plus{width:9px;height:9px;border:1px solid #666;border-radius:2px;background:linear-gradient(#000,#000) center/5px 1px no-repeat,linear-gradient(#000,#000) center/1px 5px no-repeat,#fff;margin-left:3px}
.split{display:grid;grid-template-columns:1fr 22px 1fr;gap:4px;align-items:center;height:13px}
.split i{height:1px;background:#aaa}.split b{height:6px;border:1px solid #999;background:#ddd}
.low{display:grid;grid-template-columns:1fr 16px}
.box{height:30px;overflow:hidden;background:#fff}
h3{margin:0;height:23px;line-height:20px;padding-left:7px;background:linear-gradient(#f8f8f8,#cfcfcf);border-bottom:1px solid #888}
h3+h3{background:none;border:0}
.c{background:#f1efe0}
`, () => `<header>${ic('pin', 13)}<h2 class="b">${mix('操作导航器 ...')}</h2></header>
<div class="list"><div class="rows"><table><thead><tr><th>名称</th></tr></thead><tbody>
<tr><td>${mix('GEOMETRY')}</td></tr>
<tr><td><div><span class="dots"></span>${ic('folder', 14)}<span>不使用的项</span></div></td></tr>
<tr><td><div><span class="plus"></span>${ic('csys', 16)}<span>${mix('MCS_MILL')}</span></div></td></tr>
</tbody></table></div><nx-scroll></nx-scroll></div>
<div class="split"><i></i><b></b><i></i></div>
<div class="low"><div class="box"><h3 class="b">相关性</h3><h3 class="b">细节</h3></div><nx-scroll vertical></nx-scroll><nx-scroll long></nx-scroll><div class="c"></div></div>`);

/* ---------- graphics window ---------- */
define('nx-canvas', `
:host{flex:1;min-width:0;background:linear-gradient(#b4b6b8,#bebfc1 18%,#c9cacc 35%,#d4d5d6 50%,#dbdcdd 62%,#e5e6e8 76%,#e6e7e9);border-right:1px solid #f2eedd;border-bottom:1px solid #f2eedd;overflow:hidden}
svg{width:100%;height:100%}
text{font:12px "Liberation Mono",monospace}
`, () => {
  const hole = (x, y, r) => `M${x - r} ${y}a${r} ${r} 0 1 0 ${2 * r} 0a${r} ${r} 0 1 0 ${-2 * r} 0Z`;
  return `<svg viewBox="188 211 1091 495" preserveAspectRatio="xMidYMid slice" role="img" aria-label="零件俯视图">
<path fill-rule="evenodd" fill="#ffaa4d" stroke="#f8a045" stroke-width="3" d="M533.500 281.500H887.500V651.500H533.500Z${hole(577, 338, 17)}${hole(838, 337, 17)}${hole(577, 618, 17)}${hole(840, 618, 17)}${hole(710.5, 466, 36)}"/>
<g fill="#f3a04a"><text x="826" y="466">XM</text><text x="713" y="581">YM</text><text x="828" y="651">XC</text></g>
<g fill="#f59a36"><text x="714" y="466">ZM</text><text x="890" y="651">YC</text><text x="889" y="711">ZC</text></g>
<g stroke="#4463ff" stroke-width="2" fill="none"><path d="M578 230V700M840 218V697M512 338H901M512 618H916M534 652V585H887V652M710 431V460"/></g>
<path stroke="#0000ff" stroke-width="2" d="M887 653V706"/>
<path stroke="#2a63d8" d="M573 336.500h12M578.500 331v12M834 336.500h12M839.500 331v12M571 620.500h12M577.500 615v12M836 620.500h12M842.500 615v12" fill="none"/>
<g stroke="#888480" stroke-width="2" fill="none"><circle cx="710" cy="466" r="8.500"/><path d="M705 466H819M710 462V575M819 458V475L863 466.500ZM702 575H719L710.500 618Z"/><path stroke-dasharray="8 8" d="M786 467V542M711 542H786"/><path stroke-dasharray="12 4 4 4 4 4" d="M692 437H731M889 437H955"/></g>
<g fill="#888480"><text x="870" y="466">X</text><text x="711" y="625">Y</text></g>
<path stroke="#ea2a1c" stroke-width="2" d="M272 623H315"/><path stroke="#35953c" stroke-width="2" d="M272 624V666"/><circle cx="272" cy="623" r="5" fill="#acacac"/>
<text x="324" y="627" fill="#ea2a1c">X</text><text x="268" y="681" fill="#35953c">Y</text></svg>`;
});

/* ---------- dialog ---------- */
define('nx-dialog', `
:host{position:absolute;left:188px;top:-15px;width:286px;z-index:2}
.tabs{display:flex;width:146px;height:20px;border:1px solid #777;border-bottom:0;background:#1c1c1c;color:#fff}
.tabs>*{display:grid;place-items:center;height:19px;width:18px;flex:none;border-right:1px solid #888}
.tabs h2{flex:1;margin:0;line-height:17px;white-space:nowrap;font-size:14px}
.tabs .g{background:linear-gradient(#f4f4f4,#ccc)}
.tabs>:last-child{border:0}
.body{height:209px;border:1px solid #858378;border-bottom:0;background:linear-gradient(#ececec,#ebebeb 80%,#e2e2e2);padding:10px 10px 0 8px;display:flex;flex-direction:column}
fieldset{margin:0 0 0 62px;width:143px;height:58px;border:1px solid #aaa;border-top:2px solid #999;border-left:2px solid #999;padding:3px 0 0 3px;background:#d0d0d0;flex:none}
.leg{height:15px;line-height:13px;padding-left:2px}
.r{display:flex;gap:3px;margin-top:3px}
.r label{width:31px;height:32px;display:grid;place-items:center;border-radius:4px;position:relative}
.r input{position:absolute;opacity:0;margin:0}
.r label:first-child{border:1px solid #8a6a4a;background:linear-gradient(#fff,#ffe9b0 30%,#ffb54a 60%,#ffe08c);box-shadow:inset 0 2px #f04a2a}
.f{display:flex;align-items:center;justify-content:space-between;height:24px;flex:none}
.f label{padding-bottom:1px;white-space:pre}
.f input{width:56px;height:17px;border:1px solid #888;border-top:2px solid #777;border-radius:4px;padding:0 0 0 1px;font:10px "Liberation Mono",monospace;background:#fff}
.f+.f{border-top:1px solid #bbb;color:#a0a0a0}
.f input:disabled{background:#d2d2d2;color:#a5a28c;border-color:#aaa;padding-left:12px}
.w{height:22px;flex:none;margin-top:1px;border:1px solid #6c6c6c;border-top-width:2px;border-radius:4px;background:linear-gradient(#fff,#dcdcdc 45%,#c4c4c4 60%,#ececec)}
.w+.w{margin-top:4px}
.w:disabled{border-color:#bbb;color:#a6a6a6;background:linear-gradient(#fafafa,#eee 45%,#dedede 60%,#f4f4f4)}
.a{display:flex;gap:7px;justify-content:flex-end;border-top:1px solid #bbb;margin:7px -2px 0 -4px;padding:5px 8px 0 0}
.a button{width:52px;height:19px;border:1px solid #666;border-top-width:2px;border-radius:4px;line-height:14px;background:linear-gradient(#fff,#e6e6e6 50%,#cdcdcd 55%,#f6f6f6)}
.a button:first-child{border:2px solid #3c8f3c;background:linear-gradient(#e9ffdf,#b6ea9c 45%,#8abf78 55%,#a9e88c)}
footer{height:8px;background:#1b1b1b;border-radius:0 0 5px 5px}
`, () => `<div class="tabs"><button class="g" aria-label="上一个"><svg width="12" height="13"><path d="M9 2 3 6.500 9 11" fill="none" stroke="#555" stroke-width="2.500"/></svg></button><button aria-label="固定"><svg width="12" height="13"><path d="M2 2l6 6" stroke="#fff" stroke-width="3"/><path d="M10 4v7H3z" fill="#fff"/></svg></button><h2 class="b">部件表面</h2><button aria-label="关闭"><svg width="12" height="13"><path d="M1 2l9 9M10 2l-9 9" stroke="#fff" stroke-width="3"/></svg></button><button class="g" aria-label="下一个"><svg width="12" height="13"><path d="M3 2l6 4.500L3 11" fill="none" stroke="#555" stroke-width="2.500"/></svg></button></div>
<div class="body"><fieldset aria-label="选择类型"><div class="leg b">选择类型</div><div class="r">${[['face', '面'], ['tri', '平面'], ['zc', 'ZC'], ['none', '无']].map(([i, t], n) => `<label><input type="radio" name="type" aria-label="${t}" ${n ? '' : 'checked'}>${ic(i, 22)}</label>`).join('')}</div></fieldset>
<div class="f"><label for="fn">面名称</label><input id="fn" value="|"></div>
<div class="f"><label for="zc">${mix('ZC 平面   =')}</label><input id="zc" value="0.00000" disabled></div>
<button class="w">显示</button><button class="w" disabled>信息</button>
<div class="a"><button>确定</button><button>后退</button><button>取消</button></div></div><footer></footer>`);

/* ---------- task bar ---------- */
define('nx-taskbar', `
:host{display:flex;height:30px;flex:none;color:#fff;background:linear-gradient(#1f52c4 0 1px,#3f8cf0 1px 3px,#245bdb 6px,#245edc 26px,#1a44ae)}
.start{width:97px;flex:none;margin-top:1px;background:linear-gradient(#7fbf7a,#3b953b 6px,#3a9a3c 22px,#2c7a2e);border-radius:0 10px 12px 0;display:flex;align-items:center;gap:6px;padding-left:10px;font:italic 500 19px/24px "Noto Sans CJK SC",sans-serif;text-shadow:1px 1px 1px #1c4a1c;box-shadow:1px 0 #143f8e}
.start span{margin-top:-4px}
.q{display:flex;gap:7px;align-items:center;padding:0 0 0 11px;width:102px;flex:none}
.q span{font:15px/12px "Liberation Sans",sans-serif;margin:-8px 0 0 5px}
.t{flex:0 1 158px;min-width:0;height:25px;margin:3px 2px 0 0;border-radius:2px;background:#3a80f2;box-shadow:inset 1px 1px #6aa4ff,inset -1px -1px #2a62d0;display:flex;align-items:center;gap:4px;padding:0 10px;white-space:nowrap;overflow:hidden}
.t.on{background:#1b4bb6;box-shadow:inset 2px 2px #12337f}
.tray{margin-left:auto;width:59px;background:linear-gradient(#1583dd 0 1px,#18a0ee 1px 27px,#1380cc);display:flex;align-items:center;gap:5px;border-left:1px solid #0d4fa4}
.tray svg{margin-left:-9px}
`, () => `<button class="start">${ic('win', 20)}<span>开始</span></button><div class="q">${ic('ie', 16)}${ic('mail', 16)}${ic('qq', 16)}<span>»</span></div>
<button class="t on">${ic('nx', 16)}<span>${mix('NX 6 - Manufactu...')}</span></button><button class="t">${ic('wps', 14)}<span>${mix('WPS 文字 抢鲜版 ...')}</span></button><button class="t">${ic('fold', 16)}<span>${mix('F:\\y\\新建文件夹')}</span></button>
<div class="tray"><svg width="18" height="18"><circle cx="9" cy="9" r="8" fill="#2f80e4" stroke="#8fa8c8"/><path d="M11 5 6 9l5 4" fill="none" stroke="#fff" stroke-width="2"/></svg><span>${mix('15:16')}</span></div>`);

define('nx-watermark', `:host{position:absolute;right:20px;bottom:11px;z-index:3;font:400 30px/36px "Noto Sans CJK SC",sans-serif;color:#f1f3f8;text-shadow:1px 2px 1px #3a3a3a;white-space:pre;pointer-events:none}::slotted(i){font-style:normal;margin:0 3px}`, () => '<slot></slot>');

/* ---------- application ---------- */
const tools = s => s.split(' ').map(n => n === '|' ? '<nx-sep></nx-sep>' : n === 'v' ? '<nx-drop></nx-drop>' : n === '_' ? '<nx-drop low></nx-drop>' : `<nx-tool icon="${n}" ${n === 'wcs' ? 'on' : ''}></nx-tool>`).join('');
const big = (i, l, x = 'disabled') => `<nx-tool icon="${i}" label="${l}" ${x}></nx-tool>`;
define('nx-app', `
:host{display:flex;flex-direction:column;min-height:100vh;position:relative;overflow:hidden}
.space{flex:1;display:flex;position:relative;min-height:495px}
.fill{flex:0 0 64px}
`, () => `<nx-title></nx-title><nx-menu></nx-menu>
<nx-bar><nx-group><nx-start></nx-start>${tools('new open save | cut copy paste del | undo | info | find _')}</nx-group><nx-group>${tools('fit fitg zoombox zoom rotate pan box3 cube v yin page v wbox v | cutsec section _')}</nx-group><nx-group>${tools('wcs mesh palette showhide hide pick hideall | ruler angle _')}</nx-group></nx-bar>
<nx-bar tall><nx-group flush>${big('gProg', '创建程序')}${big('gTool', '创建刀具')}${big('gGeom', '创建几何|体')}${big('gOper', '创建操作')}<nx-drop low wide></nx-drop></nx-group><nx-group flush>${big('gGen', '生成刀轨')}${big('gVer', '确认刀轨')}${big('gList', '列出刀轨')}${big('gSim', '机床仿真')}<nx-sep></nx-sep>${big('gPost', '后处理')}${big('doc', '车间文档', '')}<nx-drop low></nx-drop></nx-group><div class="fill"></div><nx-group flush>${big('wedge', '显示 2D|工件', 'narrow')}<nx-drop wide></nx-drop>${big('wedge', '显示 2D|IPW', 'narrow')}<nx-drop wide></nx-drop>${big('wedgef', '显示填充|2D IPW', 'narrow')}<nx-drop wide></nx-drop><nx-drop low></nx-drop></nx-group></nx-bar>
<nx-filter></nx-filter><nx-prompt></nx-prompt><nx-groove></nx-groove>
<div class="space"><nx-tabs></nx-tabs><nx-navigator></nx-navigator><nx-canvas></nx-canvas><nx-dialog></nx-dialog></div>
<nx-bar bottom><nx-group flush>${big('bProg', '程序顺序|视图')}${big('bMach', '机床视图')}${big('bGeom', '几何视图')}${big('bMeth', '加工方法|视图')}<nx-drop low wide></nx-drop></nx-group><nx-group flush>${big('draft', '拔模...')}<nx-drop></nx-drop>${big('plus', '点(_P_)...')}<nx-drop></nx-drop>${big('curve', '复合曲线|(_C_)...')}<nx-drop></nx-drop>${big('patch', '补片开口|(_P_)...')}${big('sync', '同步建模|工具条', '')}${big('facet', '小平面化.|..')}<nx-drop></nx-drop><nx-drop low></nx-drop></nx-group></nx-bar>
<nx-taskbar></nx-taskbar><nx-watermark>头条号<i> / </i>UG编程学习之家</nx-watermark>`);
</script>
</body>
</html>
